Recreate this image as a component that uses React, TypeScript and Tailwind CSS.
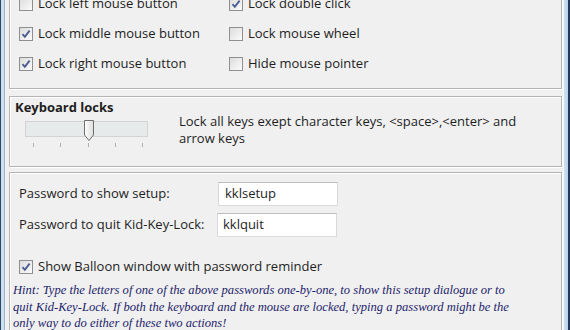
import React from 'react';

const Check: React.FC<{ checked?: boolean }> = ({ checked }) => (
  <span className="w-[14px] h-[14px] shrink-0 border border-[#8e8f8f] bg-gradient-to-br from-[#dcdcdc] to-[#fbfbfb] flex items-center justify-center">
    {checked && (
      <svg width="10" height="10" viewBox="0 0 10 10">
        <path d="M1.5 5.2 L3.8 7.8 L8.6 1.6" fill="none" stroke="#4a5d8f" strokeWidth="1.9" />
      </svg>
    )}
  </span>
);

const CheckRow: React.FC<{ label: string; checked?: boolean }> = ({ label, checked }) => (
  <div className="h-[30px] flex items-center gap-[5px]">
    <Check checked={checked} />
    <span>{label}</span>
  </div>
);

const groupCls = 'border border-[#b5b5b5] shadow-[inset_1px_1px_0_#ffffff,1px_1px_0_#ffffff]';

const App: React.FC = () => {
  const ticks = [33, 60, 88, 115, 142];

  return (
    <div className="w-[570px] h-[330px] overflow-hidden flex bg-[#f0f0f0] text-[13px] text-[#1e1e1e] font-['Open_Sans',sans-serif]">
      {/* window frame, left */}
      <div className="w-[5px] shrink-0 flex">
        <div className="w-[1px] bg-[#2e4566]" />
        <div className="w-[3px] bg-[#cddff0]" />
        <div className="w-[1px] bg-[#9fb2c6]" />
      </div>

      <div className="flex-1 pl-[4px] pr-[1px]">
        {/* Mouse locks */}
        <div className={`${groupCls} mt-[-30px] pt-[18px] pb-[9px] pl-[9px] grid grid-cols-[210px_1fr]`}>
          <CheckRow label="Lock left mouse button" />
          <CheckRow label="Lock double click" checked />
          <CheckRow label="Lock middle mouse button" checked />
          <CheckRow label="Lock mouse wheel" />
          <CheckRow label="Lock right mouse button" checked />
          <CheckRow label="Hide mouse pointer" />
        </div>

        {/* Keyboard locks */}
        <div className={`${groupCls} mt-[7px] h-[71px] flex`}>
          <div className="w-[160px] shrink-0 pl-[5px]">
            <div className="font-bold leading-[16px] mt-[2px]">Keyboard locks</div>
            <div className="relative ml-[10px] mt-[5px] w-[123px] h-[30px]">
              <div className="absolute left-0 top-[1px] w-[123px] h-[16px] border border-[#d3d3d3] bg-[#e7eaea]" />
              {ticks.map((x) => (
                <div key={x} className="absolute top-[23px] w-[1px] h-[4px] bg-[#b0b0b0]" style={{ left: x - 25 }} />
              ))}
              <svg className="absolute left-[58px] top-[-1px]" width="12" height="23" viewBox="0 0 12 23">
                <defs>
                  <linearGradient id="th" x1="0" x2="1" y1="0" y2="0">
                    <stop offset="0" stopColor="#ffffff" />
                    <stop offset="1" stopColor="#dcdcdc" />
                  </linearGradient>
                </defs>
                <path d="M1.5 1.5 H10.5 V16 L6 21.5 L1.5 16 Z" fill="url(#th)" stroke="#6f6f6f" strokeWidth="1" />
              </svg>
            </div>
          </div>
          <div className="pl-[9px] pt-[16px] leading-[17px] w-[380px]">
            Lock all keys exept character keys, &lt;space&gt;,&lt;enter&gt; and
            <br />
            arrow keys
          </div>
        </div>

        {/* Passwords */}
        <div className={`${groupCls} mt-[5px] h-[200px] pl-[9px] pt-[9px]`}>
          <div className="flex items-center h-[24px]">
            <span className="w-[199px] shrink-0">Password to show setup:</span>
            <div className="w-[120px] h-[24px] bg-white border border-[#d9d9d9] border-t-[#bdbdbd] pl-[6px] flex items-center">kklsetup</div>
          </div>
          <div className="flex items-center h-[24px] mt-[7px]">
            <span className="w-[198px] shrink-0">Password to quit Kid-Key-Lock:</span>
            <div className="w-[120px] h-[24px] bg-white border border-[#d9d9d9] border-t-[#bdbdbd] pl-[5px] flex items-center">kklquit</div>
          </div>
          <div className="mt-[19px] flex items-center gap-[5px] h-[22px]">
            <Check checked />
            <span>Show Balloon window with password reminder</span>
          </div>
          <div className="ml-[-6px] mt-[4px] italic text-[12.6px] leading-[16.5px] whitespace-nowrap text-[#1d1d6b] font-['Liberation_Serif',serif]">
            Hint: Type the letters of one of the above passwords one-by-one, to show this setup dialogue or to
            <br />
            quit Kid-Key-Lock. If both the keyboard and the mouse are locked, typing a password might be the
            <br />
            only way to do either of these two actions!
          </div>
        </div>
      </div>

      {/* window frame, right */}
      <div className="w-[7px] shrink-0 flex">
        <div className="w-[1px] bg-[#f7f7f7]" />
        <div className="w-[4px] bg-gradient-to-r from-[#cfe3f3] to-[#b8d2ea]" />
        <div className="w-[2px] bg-[#27395a]" />
      </div>
    </div>
  );
};

export default App;
